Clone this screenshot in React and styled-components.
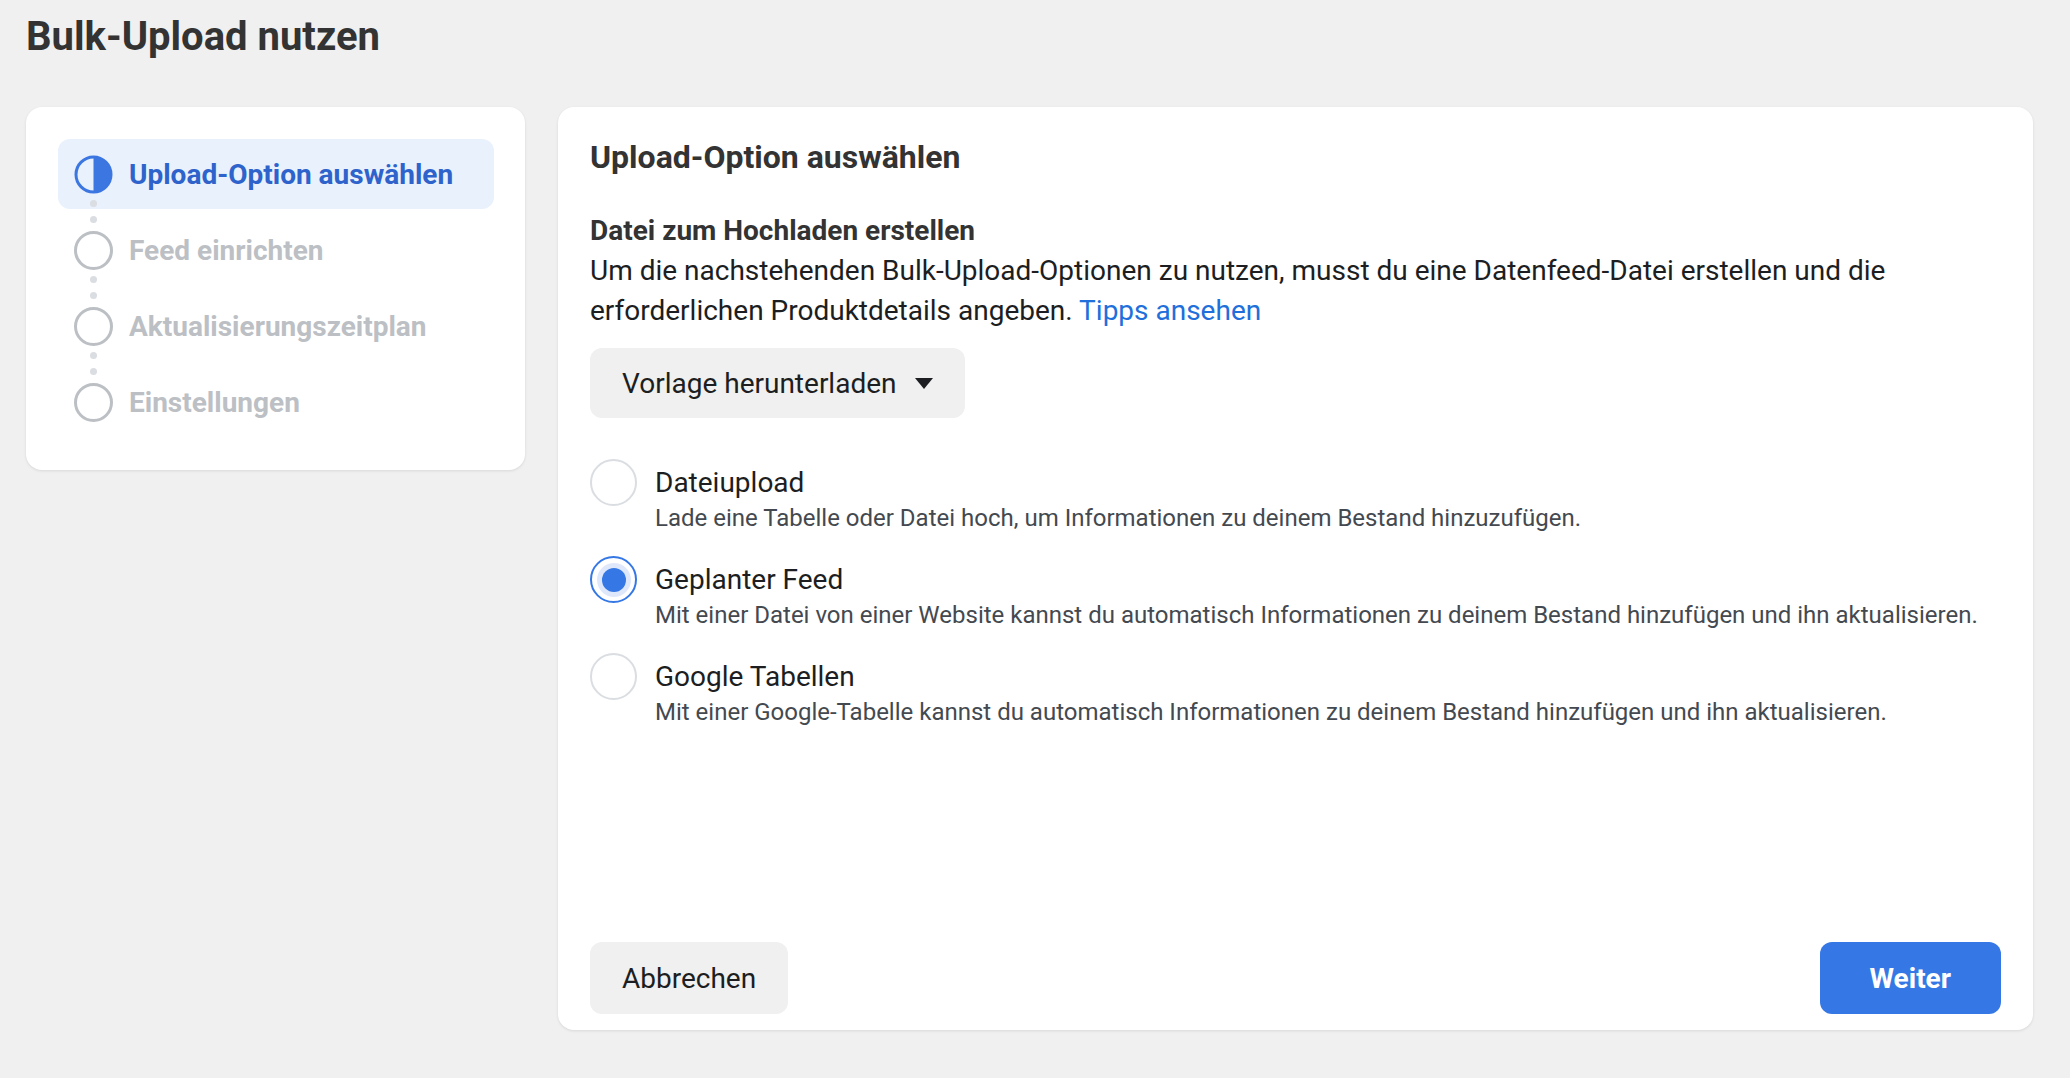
import styled, { createGlobalStyle } from 'styled-components';

const GlobalStyle = createGlobalStyle`
  html, body {
    margin: 0;
    padding: 0;
    background-color: #f0f0f0;
    font-family: Roboto, "Liberation Sans", Arial, sans-serif;
    color: #1c1e21;
  }
`;

const Page = styled.div`
  padding: 11px 37px 40px 26px;
  min-height: 1078px;
  box-sizing: border-box;
`;

const PageTitle = styled.h1`
  margin: 0;
  font-size: 40px;
  line-height: 52px;
  font-weight: 700;
  color: #333;
`;

const Columns = styled.div`
  display: flex;
  align-items: flex-start;
  gap: 33px;
  margin-top: 44px;
`;

const Card = styled.div`
  background-color: #fff;
  border-radius: 16px;
  box-shadow: 0 1px 3px rgba(0, 0, 0, 0.1);
  box-sizing: border-box;
`;

const StepsCard = styled(Card)`
  width: 499px;
  padding: 32px 31px 33px 32px;
  display: flex;
  flex-direction: column;
  gap: 6px;
`;

const Step = styled.div`
  position: relative;
  height: 70px;
  display: flex;
  align-items: center;
  gap: 16px;
  padding-left: 16px;
  border-radius: 12px;
  background-color: ${(p) => (p.active ? '#e9f1fc' : 'transparent')};
  font-size: 28px;
  font-weight: 700;
  color: ${(p) => (p.active ? '#2e63cc' : '#bcc0c4')};

  &:not(:last-child)::after {
    content: '';
    position: absolute;
    left: 32px;
    top: 61px;
    width: 7px;
    height: 7px;
    border-radius: 50%;
    background-color: #dadde1;
    box-shadow: 0 16px 0 #dadde1;
  }
`;

const StepCircle = styled.span`
  width: 39px;
  height: 39px;
  box-sizing: border-box;
  border-radius: 50%;
  border: 3px solid #bcc0c4;
  flex-shrink: 0;
`;

const HalfCircle = () => (
  <svg width="39" height="39" viewBox="0 0 39 39" style={{ flexShrink: 0 }}>
    <circle cx="19.5" cy="19.5" r="17.5" fill="none" stroke="#3b76e1" strokeWidth="3" />
    <path d="M19.5 2 A17.5 17.5 0 0 1 19.5 37 Z" fill="#3b76e1" />
  </svg>
);

const MainCard = styled(Card)`
  flex: 1;
  height: 923px;
  padding: 32px 32px 16px 32px;
  display: flex;
  flex-direction: column;
`;

const CardTitle = styled.h2`
  margin: 0;
  font-size: 32px;
  line-height: 36px;
  font-weight: 700;
  color: #333;
`;

const SubTitle = styled.h3`
  margin: 36px 0 0;
  font-size: 28px;
  line-height: 40px;
  font-weight: 700;
  color: #333;
`;

const Paragraph = styled.p`
  margin: 0;
  font-size: 28px;
  line-height: 40px;
  color: #1c1e21;
`;

const Link = styled.a`
  color: #216fdb;
  text-decoration: none;
`;

const GrayButton = styled.button`
  display: inline-flex;
  align-items: center;
  gap: 18px;
  height: ${(p) => p.h || 70}px;
  padding: 0 32px;
  border: none;
  border-radius: 12px;
  background-color: #f0f0f0;
  font-family: inherit;
  font-size: 28px;
  color: #1c1e21;
  cursor: pointer;
`;

const DropdownButton = styled(GrayButton)`
  align-self: flex-start;
  margin-top: 17px;
  padding-right: 32px;
`;

const Caret = styled.span`
  width: 0;
  height: 0;
  border-left: 9px solid transparent;
  border-right: 9px solid transparent;
  border-top: 11px solid #1c1e21;
`;

const Options = styled.div`
  display: flex;
  flex-direction: column;
  gap: 27px;
  margin-top: 47px;
`;

const Option = styled.label`
  display: flex;
  align-items: flex-start;
  gap: 18px;
  cursor: pointer;
`;

const Radio = styled.span`
  width: 47px;
  height: 47px;
  margin-top: -6px;
  box-sizing: border-box;
  border-radius: 50%;
  border: 2px solid ${(p) => (p.checked ? '#3578e5' : '#dadde1')};
  display: flex;
  align-items: center;
  justify-content: center;
  flex-shrink: 0;

  &::after {
    content: '';
    display: ${(p) => (p.checked ? 'block' : 'none')};
    width: 24px;
    height: 24px;
    border-radius: 50%;
    background-color: #3578e5;
    box-shadow: 0 0 0 5px #dfe8fb;
  }
`;

const OptionText = styled.div`
  display: flex;
  flex-direction: column;
`;

const OptionLabel = styled.span`
  font-size: 28px;
  line-height: 36px;
  color: #1c1e21;
`;

const OptionDesc = styled.span`
  font-size: 24px;
  line-height: 34px;
  color: #444950;
`;

const Footer = styled.div`
  margin-top: auto;
  display: flex;
  justify-content: space-between;
  align-items: center;
`;

const PrimaryButton = styled.button`
  height: 72px;
  padding: 0 50px;
  border: none;
  border-radius: 12px;
  background-color: #3578e5;
  color: #fff;
  font-family: inherit;
  font-size: 28px;
  font-weight: 700;
  cursor: pointer;
`;

const steps = ['Upload-Option auswählen', 'Feed einrichten', 'Aktualisierungszeitplan', 'Einstellungen'];

const options = [
  {
    label: 'Dateiupload',
    desc: 'Lade eine Tabelle oder Datei hoch, um Informationen zu deinem Bestand hinzuzufügen.',
  },
  {
    label: 'Geplanter Feed',
    desc: 'Mit einer Datei von einer Website kannst du automatisch Informationen zu deinem Bestand hinzufügen und ihn aktualisieren.',
    checked: true,
  },
  {
    label: 'Google Tabellen',
    desc: 'Mit einer Google-Tabelle kannst du automatisch Informationen zu deinem Bestand hinzufügen und ihn aktualisieren.',
  },
];

const App = () => {
  return (
    <>
      <GlobalStyle />
      <Page>
        <PageTitle>Bulk-Upload nutzen</PageTitle>
        <Columns>
          <StepsCard>
            {steps.map((s, i) => (
              <Step key={s} active={i === 0}>
                {i === 0 ? <HalfCircle /> : <StepCircle />}
                {s}
              </Step>
            ))}
          </StepsCard>
          <MainCard>
            <CardTitle>Upload-Option auswählen</CardTitle>
            <SubTitle>Datei zum Hochladen erstellen</SubTitle>
            <Paragraph>
              Um die nachstehenden Bulk-Upload-Optionen zu nutzen, musst du eine Datenfeed-Datei erstellen und die
              erforderlichen Produktdetails angeben. <Link href="#">Tipps ansehen</Link>
            </Paragraph>
            <DropdownButton>
              Vorlage herunterladen
              <Caret />
            </DropdownButton>
            <Options>
              {options.map((o) => (
                <Option key={o.label}>
                  <Radio checked={o.checked} />
                  <OptionText>
                    <OptionLabel>{o.label}</OptionLabel>
                    <OptionDesc>{o.desc}</OptionDesc>
                  </OptionText>
                </Option>
              ))}
            </Options>
            <Footer>
              <GrayButton h={72}>Abbrechen</GrayButton>
              <PrimaryButton>Weiter</PrimaryButton>
            </Footer>
          </MainCard>
        </Columns>
      </Page>
    </>
  );
};

export default App;
